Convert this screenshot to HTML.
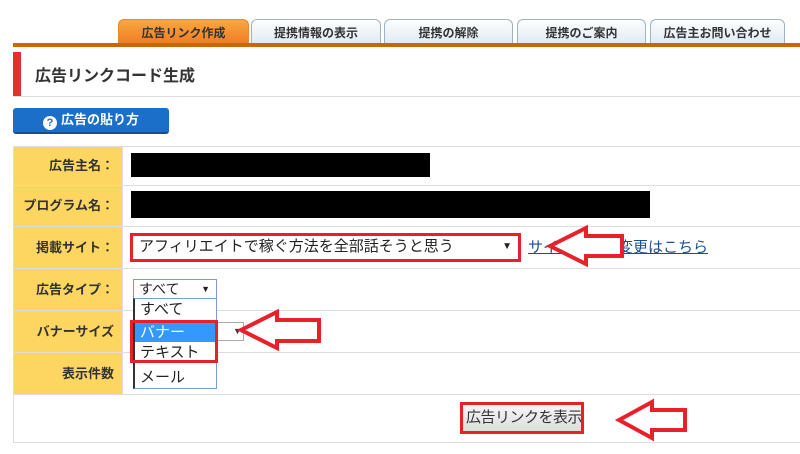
<!DOCTYPE html>
<html><head><meta charset="utf-8"><style>
*{margin:0;padding:0;box-sizing:border-box}
body{width:800px;height:454px;background:#fff;position:relative;overflow:hidden;font-family:"Liberation Sans","Noto Sans CJK JP",sans-serif;color:#333}
.a{position:absolute}
.tab{position:absolute;top:19px;height:26px;border:1px solid #9fb3c4;border-bottom:none;border-radius:6px 6px 0 0;background:linear-gradient(#fdfeff,#dfe9f1);font-size:12px;font-weight:bold;text-align:center;line-height:26px;color:#333}
.tab.on{background:linear-gradient(#f9a741,#ef7a22);border-color:#e08a3a}
.lab{position:absolute;left:14px;width:108px;background:#fdd662;font-size:13px;font-weight:bold;text-align:right;padding-right:8px;color:#333;white-space:nowrap}
.hl{position:absolute;left:13px;width:787px;height:1px;background:#ddd}
</style></head><body>
<div class="tab on" style="left:118px;width:131px">広告リンク作成</div>
<div class="tab" style="left:251px;width:130px">提携情報の表示</div>
<div class="tab" style="left:384px;width:129px">提携の解除</div>
<div class="tab" style="left:517px;width:129px">提携のご案内</div>
<div class="tab" style="left:650px;width:135px">広告主お問い合わせ</div>
<div class="a" style="left:13px;top:43px;width:787px;height:4px;background:#cc6600"></div>
<div class="a" style="left:13px;top:52px;width:8px;height:44px;background:#e03030"></div>
<div class="a" style="left:35px;top:62px;font-size:16px;font-weight:bold;color:#333">広告リンクコード生成</div>
<div class="a" style="left:13px;top:96px;width:787px;height:1px;background:#ddd"></div>
<div class="a" style="left:13px;top:108px;width:156px;height:26px;background:#1b6fc9;border-radius:3px;border-bottom:2px solid #0f4f96;color:#fff;font-size:13px;font-weight:bold;line-height:24px;text-align:center"><span style="display:inline-block;width:14px;height:14px;border-radius:7px;background:#fff;color:#1b6fc9;font-size:11px;line-height:14px;vertical-align:-2px;margin-right:4px">?</span>広告の貼り方</div>
<div class="a" style="left:13px;top:146px;width:787px;height:297px;border:1px solid #ddd;border-right:none"></div>
<div class="lab" style="top:147px;height:248px"></div>
<div class="lab" style="top:147px;height:38px;line-height:38px">広告主名：</div>
<div class="lab" style="top:186px;height:40px;line-height:40px">プログラム名：</div>
<div class="lab" style="top:227px;height:41px;line-height:41px">掲載サイト：</div>
<div class="lab" style="top:269px;height:41px;line-height:41px">広告タイプ：</div>
<div class="lab" style="top:311px;height:41px;line-height:41px">バナーサイズ</div>
<div class="lab" style="top:353px;height:41px;line-height:41px">表示件数</div>
<div class="a" style="left:122px;top:147px;width:1px;height:248px;background:#ddd"></div>
<div class="hl" style="top:185px"></div><div class="hl" style="top:226px"></div><div class="hl" style="top:268px"></div><div class="hl" style="top:310px"></div><div class="hl" style="top:352px"></div><div class="hl" style="top:394px"></div>
<div class="a" style="left:131px;top:153px;width:299px;height:24px;background:#000"></div>
<div class="a" style="left:131px;top:191px;width:519px;height:27px;background:#000"></div>
<div class="a" style="left:130px;top:233px;width:391px;height:29px;border:3px solid #e8202a;background:#fff;font-size:15px;line-height:22px;padding-left:6px;color:#222">アフィリエイトで稼ぐ方法を全部話そうと思う<span style="position:absolute;right:6px;font-size:10px">▼</span></div>
<div class="a" style="left:528px;top:236px;font-size:15px;color:#1a4f8c;text-decoration:underline">サイト情報の変更はこちら</div>
<div class="a" style="left:216px;top:322px;width:28px;height:19px;border:1px solid #aaa;background:#fff;font-size:9px;line-height:17px;padding-left:16px">▼</div>
<div class="a" style="left:133px;top:279px;width:84px;height:20px;border:1px solid #7a9cd3;background:#fff;font-size:14px;line-height:18px;padding-left:5px;color:#222">すべて<span style="position:absolute;right:6px;font-size:9px">▼</span></div>
<div class="a" style="left:133px;top:298px;width:84px;height:91px;border:1px solid #7a9cd3;border-left:2px solid #333;background:#fff;font-size:15px;color:#222">
<div style="height:24px;line-height:22px;padding-left:5px">すべて</div>
<div style="height:19px;line-height:19px;padding-left:5px;background:#3399ff;color:#fff">バナー</div>
<div style="height:23px;line-height:22px;padding-left:5px">テキスト</div>
<div style="height:24px;line-height:26px;padding-left:5px">メール</div>
</div>
<div class="a" style="left:130px;top:320px;width:88px;height:43px;border:3px solid #e8202a"></div>
<div class="a" style="left:460px;top:402px;width:124px;height:32px;border:3px solid #e8202a;background:linear-gradient(#f6f6f6,#ddd);font-size:15px;line-height:26px;color:#333;white-space:nowrap;overflow:hidden;padding-left:3px;letter-spacing:-0.5px">広告リンクを表示</div>
<svg class="a" style="left:0;top:0" width="800" height="454">
<g fill="#fff" stroke="#e8202a" stroke-width="4" stroke-linejoin="miter">
<path d="M550,246 L586,228 L586,236 L622,236 L622,256 L586,256 L586,264 Z"/>
<path d="M241,330 L277,312 L277,320 L319,320 L319,341 L277,341 L277,348 Z"/>
<path d="M619,420 L652,402 L652,410 L685,410 L685,430 L652,430 L652,438 Z"/>
</g></svg>
</body></html>
